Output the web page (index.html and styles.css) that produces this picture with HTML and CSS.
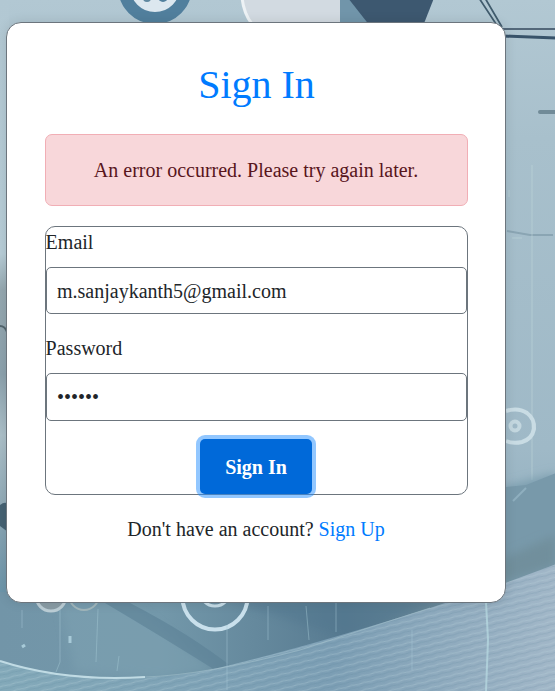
FILE: index.html
```html
<!DOCTYPE html>
<html lang="en">
<head>
<meta charset="utf-8">
<title>Sign In</title>
<link rel="stylesheet" href="styles.css">
</head>
<body>
<svg class="backdrop" viewBox="0 0 555 691" aria-hidden="true">
  <defs>
    <linearGradient id="wall" x1="0" y1="0" x2="0" y2="1">
      <stop offset="0" stop-color="#b2c8d3"/>
      <stop offset=".2" stop-color="#a8c0cc"/>
      <stop offset=".65" stop-color="#9fb9c7"/>
      <stop offset="1" stop-color="#7d9fb2"/>
    </linearGradient>
    <linearGradient id="edge" x1="0" y1="0" x2="0" y2="1">
      <stop offset="0" stop-color="#b2c8d3"/>
      <stop offset=".42" stop-color="#b7cdd7"/>
      <stop offset=".48" stop-color="#95a8b0"/>
      <stop offset=".62" stop-color="#8ca2ad"/>
      <stop offset=".72" stop-color="#acc0c9"/>
      <stop offset=".84" stop-color="#8fa9b6"/>
      <stop offset="1" stop-color="#6792a8"/>
    </linearGradient>
    <linearGradient id="floor" x1="0" y1="0" x2="1" y2="0">
      <stop offset="0" stop-color="#7295a8"/>
      <stop offset=".3" stop-color="#7398aa"/>
      <stop offset=".65" stop-color="#587b91"/>
      <stop offset="1" stop-color="#79949f"/>
    </linearGradient>
    <linearGradient id="weave" x1="0" y1="0" x2="1" y2="0">
      <stop offset="0" stop-color="#83a9b9"/>
      <stop offset=".6" stop-color="#7c9eb4"/>
      <stop offset="1" stop-color="#a2b7c8"/>
    </linearGradient>
    <pattern id="threads" width="13" height="7" patternUnits="userSpaceOnUse" patternTransform="rotate(-14)">
      <path d="M0 2Q6 0 13 2" fill="none" stroke="#bfd7df" stroke-opacity=".32"/>
      <path d="M0 5Q6 3 13 5" fill="none" stroke="#507991" stroke-opacity=".18"/>
    </pattern>
    <filter id="soft"><feGaussianBlur stdDeviation=".7"/></filter>
    <filter id="haze"><feGaussianBlur stdDeviation="5"/></filter>
  </defs>
  <rect width="555" height="691" fill="url(#wall)"/>
  <rect width="9" height="604" fill="url(#edge)"/>
  <g filter="url(#soft)">
    <circle cx="155" cy="-13" r="31" fill="#dce7ef" stroke="#517f9d" stroke-width="12"/>
    <circle cx="147" cy="-2" r="4" fill="#6088a0"/><circle cx="163" cy="-3" r="5" fill="#517f9d"/>
    <path d="M242-2Q244 14 252 24H340V-2Z" fill="#d2dae1"/>
    <path d="M242-2Q244 14 252 24" fill="none" stroke="#edf2f5" stroke-width="3"/>
    <path d="M340-2H352L370 24H340Z" fill="#7195aa"/>
    <path d="M348-2H434L423 26H370Z" fill="#3c5870"/>
    <path d="M479-2L498 27M485-2L502 27" fill="none" stroke="#405b6d" stroke-width="1.7"/>
    <path d="M502 29H556" stroke="#53687a" stroke-width="2"/>
    <path d="M503 36L556 38" stroke="#38536a" stroke-width="3"/>
    <path d="M540 112H556" stroke="#718b98" stroke-width="4" stroke-linecap="round"/>
    <path d="M507 231L530 235L553 235" fill="none" stroke="#8aa5b3" stroke-width="2"/>
    <path d="M532 165V480M509 190V197M512 238H522" stroke="#c2d8dc" stroke-opacity=".55"/>
    <path d="M0 326Q5 326 7 332M7 330V342" stroke="#52656e" stroke-width="2" fill="none"/>
    <path d="M0 505Q5 501 8 504V532L0 526Z" fill="#446273"/>
  </g>
  <path d="M500 488L556 473V570L500 590Z" fill="#7b9eaf" filter="url(#haze)"/>
  <path d="M506 487L526 485L556 473V568L506 587Z" fill="#7899aa" filter="url(#soft)"/>
  <path d="M500 560L556 535V565L500 583Z" fill="#718f9c" filter="url(#haze)"/>
  <g filter="url(#soft)" fill="none">
    <path d="M506 411Q518 407 527 413Q535 419 534 429Q532 439 522 442Q513 444 506 441" stroke="#c9dce4" stroke-width="4"/>
    <circle cx="515" cy="426" r="4.5" stroke="#c3d7df" stroke-width="4"/>
    <path d="M513 501L526 488" stroke="#8fafbf" stroke-width="2"/>
  </g>
  <path d="M0 592H530V600L300 691H0Z" fill="url(#floor)"/>
  <path d="M105 603H130L215 670L165 678L75 672L60 603Z" fill="#7fa3b3" opacity=".5" filter="url(#haze)"/>
  <path d="M105 603Q164 638 215 670L232 667Q190 634 130 603Z" fill="#5d8297" opacity=".65" filter="url(#soft)"/>
  <path d="M230 600H435L350 640Z" fill="#4f748d" opacity=".45" filter="url(#haze)"/>
  <path d="M0 661Q110 692 218 668Q310 646 430 608L503 584L556 564V692H0Z" fill="url(#weave)"/>
  <path d="M0 661Q110 692 218 668Q310 646 430 608L503 584L556 564V692H0Z" fill="url(#threads)"/>
  <g filter="url(#soft)" fill="none">
    <path d="M0 661Q65 682 145 677" stroke="#c0dbe4" stroke-width="2"/>
    <path d="M145 677Q205 675 300 650L430 608" stroke="#a5c3ce" stroke-opacity=".55"/>
    <circle cx="51" cy="596" r="15" fill="#899ca5" stroke="#bbcdd5" stroke-width="3"/>
    <circle cx="84" cy="595" r="15" stroke="#a1b6bb" stroke-width="2"/>
    <circle cx="215" cy="597" r="32.5" stroke="#c9e0ec" stroke-width="4"/>
    <circle cx="215" cy="591" r="15" stroke="#c5dce7" stroke-width="3"/>
    <path d="M60 610V662L56 672M98 609L96 662M22 610V628M119 656L117 671M227 625V690M268 606V640M306 606L309 640M336 603V632M412 630V670" stroke="#a6c9d5" stroke-opacity=".45"/>
    <path d="M486 602L488 640L486 691" stroke="#b8dce3" stroke-opacity=".7" stroke-width="2"/>
    <path d="M70 636V643M22 647L25 645" stroke="#a7cad8" stroke-width="3"/>
  </g>
</svg>
<main class="card">
  <h1 class="title">Sign In</h1>
  <div class="alert" role="alert">An error occurred. Please try again later.</div>
  <form class="form">
    <div class="group">
      <label for="email">Email</label>
      <input class="field" id="email" type="text" value="m.sanjaykanth5@gmail.com">
    </div>
    <div class="group">
      <label for="password">Password</label>
      <input class="field field-password" id="password" type="password" value="secret">
    </div>
    <button class="submit" type="button">Sign In</button>
  </form>
  <p class="signup">Don't have an account? <a href="#">Sign Up</a></p>
</main>
</body>
</html>
```
FILE: styles.css
```css
* { box-sizing: border-box; }

body {
  margin: 0;
  height: 691px;
  overflow: hidden;
  padding: 22px 0 0 6px;
  background: #a8c0cc;
  color: #212529;
  font: 20px/30px "Liberation Serif", "Times New Roman", serif;
}

.backdrop {
  position: absolute;
  inset: 0;
  width: 555px;
  height: 691px;
  z-index: -1;
}

.card {
  width: 500px;
  height: 581px;
  padding: 38px 37px 0 38px;
  border: 1px solid #6c757d;
  border-radius: 15px;
  background: #fff;
  box-shadow: 0 0 12px rgba(0, 0, 0, .1);
}

.title {
  margin: 0 0 25px;
  color: #007bff;
  font-size: 40px;
  font-weight: 400;
  line-height: 48px;
  text-align: center;
}

.alert {
  height: 72px;
  margin-bottom: 20px;
  padding: 20px 21px 20px 20px;
  border: 1px solid #f1aeb5;
  border-radius: 7px;
  background: #f8d7da;
  color: #58151c;
  text-align: center;
}

.form {
  display: flex;
  flex-direction: column;
  height: 269px;
  border: 1px solid #6c757d;
  border-radius: 10px;
}

.group { margin-bottom: 19px; }
.group + .group { margin-bottom: 18px; }

label {
  display: block;
  margin: 0 0 10px -.4px;
}

.field {
  display: block;
  width: 100%;
  height: 47px;
  padding: 1px 10px 0;
  border: 1px solid #6c757d;
  border-radius: 5px;
  background: #fff;
  color: #212529;
  font: inherit;
}

.field-password {
  height: 48px;
  padding-top: 0;
}

.submit {
  align-self: center;
  flex: none;
  width: 112px;
  height: 55px;
  margin-right: 1px;
  padding: 1px 0 0;
  border: 0;
  border-radius: 5px;
  background: #0069d9;
  box-shadow: 0 0 0 4px rgba(38, 143, 255, .5);
  color: #fff;
  font: bold 20px/30px "Liberation Serif", "Times New Roman", serif;
}

.signup {
  margin: 19px 1px 0 0;
  text-align: center;
}

.signup a {
  color: #007bff;
  text-decoration: none;
}
```
